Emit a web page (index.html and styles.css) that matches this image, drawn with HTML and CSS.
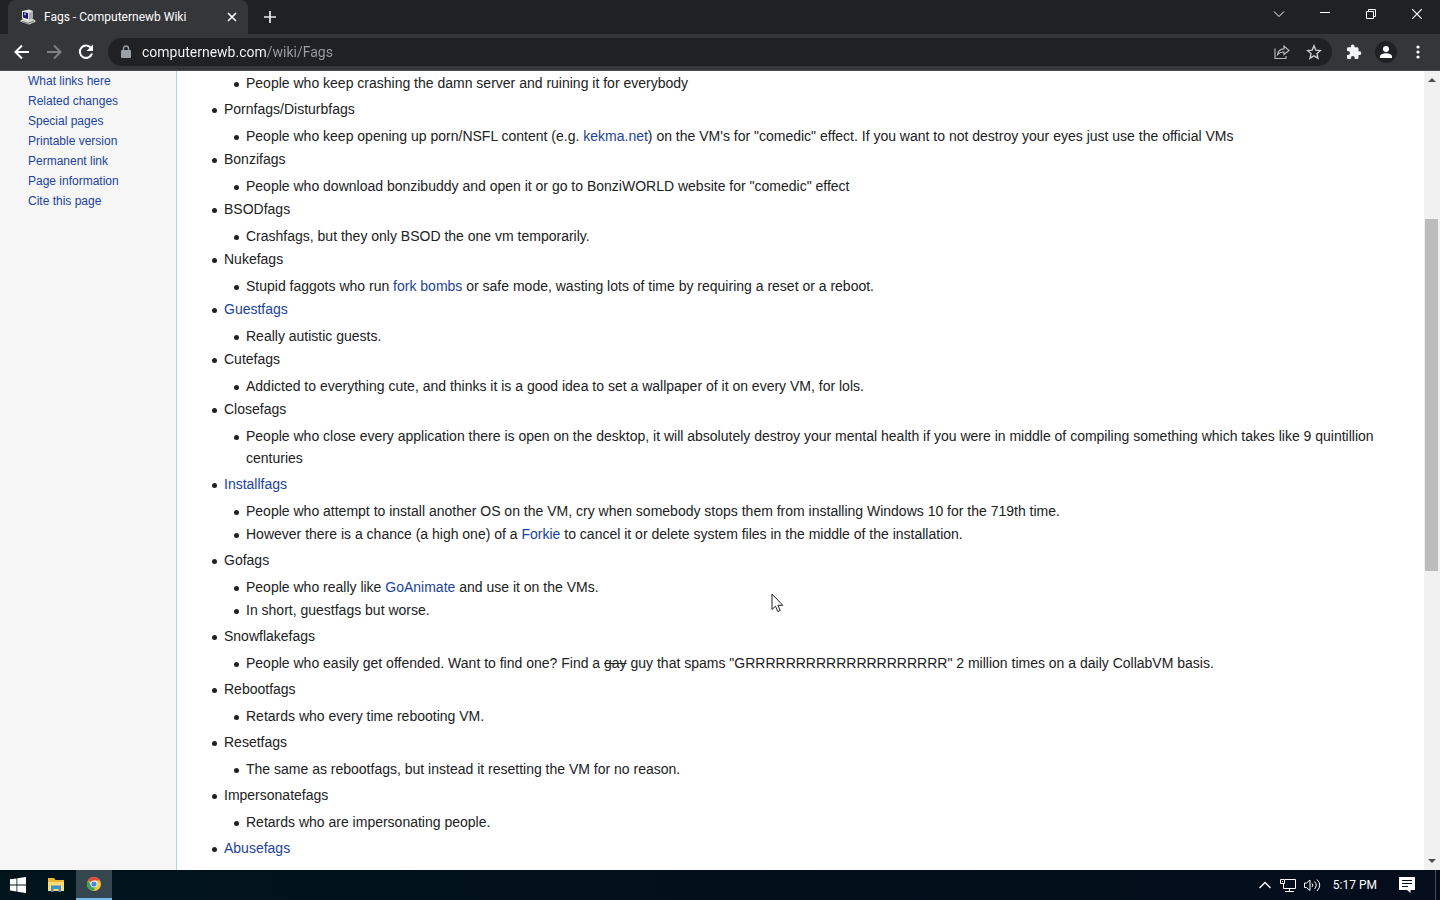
FILE: index.html
```html
<!DOCTYPE html>
<html lang="en">
  <head>
    <meta charset="UTF-8" />
    <meta name="viewport" content="width=device-width, initial-scale=1.0" />
    <title>Fags - Computernewb Wiki</title>
    <link rel="stylesheet" href="styles.css">
  </head>
  <body>
    <header class="tabstrip">
      <div class="tab">
        <svg class="favicon" width="16" height="16" viewBox="0 0 16 16">
          <path d="M0 11.500l3-2h10l3 2v1.500l-7 3-9-3z" fill="#d6d6d0" stroke="#0c0c0c" stroke-width=".6" />
          <path d="M2 2L9 .5l4 1.500v7l-5 3-6-2.500z" fill="#e6e6e0" />
          <path d="M3 3l5 1v6L3 8.500z" fill="#17176d" />
          <path d="M4 4l2 .5v2L4 6z" fill="#8f96f0" />
          <path d="M9 4l4-2v7l-4 2z" fill="#a9a9b4" />
          <path d="M2 12.500l6 1.800 6-2.300" fill="none" stroke="#555" stroke-width=".8" />
        </svg>
        <span class="tab-title">Fags - Computernewb Wiki</span>
        <button class="icon-btn tab-close" aria-label="Close tab">
          <svg width="10" height="10" viewBox="0 0 10 10"><path d="M1 1l8 8M9 1l-8 8" stroke="#fff" stroke-width="1.6" /></svg>
        </button>
      </div>
      <button class="icon-btn new-tab" aria-label="New tab">
        <svg width="12" height="12" viewBox="0 0 12 12"><path d="M6 0v12M0 6h12" stroke="#e8eaed" stroke-width="1.7" /></svg>
      </button>
      <div class="window-buttons">
        <button class="icon-btn" aria-label="Search tabs">
          <svg width="12" height="12" viewBox="0 0 12 12"><path d="M1 3.500l5 5 5-5" fill="none" stroke="#fff" /></svg>
        </button>
        <button class="icon-btn" aria-label="Minimize">
          <svg width="10" height="10" viewBox="0 0 10 10"><path d="M0 3.500h10" stroke="#fff" /></svg>
        </button>
        <button class="icon-btn" aria-label="Restore">
          <svg width="10" height="10" viewBox="0 0 10 10"><path d="M.5 2.500h7v7h-7zM2.500 2.500v-2h7v7h-2" fill="none" stroke="#fff" /></svg>
        </button>
        <button class="icon-btn" aria-label="Close">
          <svg width="10" height="10" viewBox="0 0 10 10"><path d="M0 0l10 10M10 0L0 10" stroke="#fff" stroke-width="1.2" /></svg>
        </button>
      </div>
    </header>

    <nav class="toolbar">
      <button class="icon-btn nav-btn" aria-label="Back">
        <svg width="16" height="16" viewBox="0 0 16 16"><path d="M15 8H2M8 1.500L1.500 8 8 14.500" fill="none" stroke="#fff" stroke-width="2" /></svg>
      </button>
      <button class="icon-btn nav-btn" aria-label="Forward">
        <svg width="16" height="16" viewBox="0 0 16 16"><path d="M1 8h13M8 1.500L14.500 8 8 14.500" fill="none" stroke="#808185" stroke-width="2" /></svg>
      </button>
      <button class="icon-btn nav-btn" aria-label="Reload">
        <svg width="16" height="16" viewBox="0 0 16 16">
          <path d="M13.200 4.200A6.200 6.200 0 1 0 14 9.500" fill="none" stroke="#fff" stroke-width="2" />
          <path d="M15 .5v6.500H8.500z" fill="#fff" />
        </svg>
      </button>
      <div class="omnibox">
        <svg width="10" height="14" viewBox="0 0 10 14">
          <path d="M2.500 6V3.500a2.500 2.500 0 0 1 5 0V6" fill="none" stroke="#9aa0a6" stroke-width="1.400" />
          <rect x="0" y="5" width="10" height="8" rx="1" fill="#9aa0a6" />
        </svg>
        <input class="url" type="text" aria-label="Address" value="computernewb.com/wiki/Fags" />
        <button class="icon-btn" aria-label="Share">
          <svg width="16" height="16" viewBox="0 0 16 16" fill="none" stroke="#b4b7bb" stroke-width="1.200">
            <path d="M1 4.500v10h11V12" />
            <path d="M3.500 10.500C4 6.500 6.500 5 10 4.800V2l5 4.500-5 4V8C7 8 5 8.700 3.500 10.500z" />
          </svg>
        </button>
        <button class="icon-btn" aria-label="Bookmark">
          <svg width="16" height="16" viewBox="0 0 16 16"><path d="M8 1.800l1.800 4.300 4.700.4L11 9.600l1 4.600-4-2.400-4 2.400 1-4.600-3.500-3.100 4.700-.4z" fill="none" stroke="#c8cacd" stroke-width="1.400" /></svg>
        </button>
      </div>
      <div class="actions">
        <button class="icon-btn" aria-label="Extensions">
          <svg width="16" height="16" viewBox="0 0 16 16"><path d="M13.500 7.300h-1V4.600c0-.8-.6-1.400-1.400-1.400H8.500v-1a1.800 1.800 0 0 0-3.600 0v1H2.300C1.500 3.200 1 3.800 1 4.600v2.500h1a2 2 0 0 1 0 4H1v2.600c0 .8.500 1.300 1.300 1.300h2.600v-1a1.900 1.900 0 0 1 3.800 0v1h2.400c.8 0 1.400-.5 1.400-1.300V11h1a1.850 1.850 0 0 0 0-3.700z" fill="#f1f3f4" /></svg>
        </button>
        <button class="icon-btn profile" aria-label="Profile">
          <svg width="12" height="12" viewBox="0 0 12 12" fill="#fff"><circle cx="6" cy="3" r="3" /><path d="M0 12v-1.500C0 8.200 3.500 7.200 6 7.200s6 1 6 3.300V12z" /></svg>
        </button>
        <button class="icon-btn" aria-label="Menu">
          <svg width="4" height="14" viewBox="0 0 4 14" fill="#fff"><circle cx="2" cy="2" r="1.600" /><circle cx="2" cy="7" r="1.600" /><circle cx="2" cy="12" r="1.600" /></svg>
        </button>
      </div>
    </nav>

    <div class="viewport">
      <aside class="sidebar">
        <a href="#">What links here</a>
        <a href="#">Related changes</a>
        <a href="#">Special pages</a>
        <a href="#">Printable version</a>
        <a href="#">Permanent link</a>
        <a href="#">Page information</a>
        <a href="#">Cite this page</a>
      </aside>
      <main class="content">
        <ul>
          <li class="continued">
            <ul>
              <li>People who keep crashing the damn server and ruining it for everybody</li>
            </ul>
          </li>
        </ul>
        <ul>
          <li>Pornfags/Disturbfags
            <ul>
              <li>People who keep opening up porn/NSFL content (e.g. <a href="#">kekma.net</a>) on the VM's for "comedic" effect. If you want to not destroy your eyes just use the official VMs</li>
            </ul>
          </li>
          <li>Bonzifags
            <ul>
              <li>People who download bonzibuddy and open it or go to BonziWORLD website for "comedic" effect</li>
            </ul>
          </li>
          <li>BSODfags
            <ul>
              <li>Crashfags, but they only BSOD the one vm temporarily.</li>
            </ul>
          </li>
          <li>Nukefags
            <ul>
              <li>Stupid faggots who run <a href="#">fork bombs</a> or safe mode, wasting lots of time by requiring a reset or a reboot.</li>
            </ul>
          </li>
          <li><a href="#">Guestfags</a>
            <ul>
              <li>Really autistic guests.</li>
            </ul>
          </li>
          <li>Cutefags
            <ul>
              <li>Addicted to everything cute, and thinks it is a good idea to set a wallpaper of it on every VM, for lols.</li>
            </ul>
          </li>
          <li>Closefags
            <ul>
              <li>People who close every application there is open on the desktop, it will absolutely destroy your mental health if you were in middle of compiling something which takes like 9 quintillion centuries</li>
            </ul>
          </li>
        </ul>
        <ul>
          <li><a href="#">Installfags</a>
            <ul>
              <li>People who attempt to install another OS on the VM, cry when somebody stops them from installing Windows 10 for the 719th time.</li>
              <li>However there is a chance (a high one) of a <a href="#">Forkie</a> to cancel it or delete system files in the middle of the installation.</li>
            </ul>
          </li>
        </ul>
        <ul>
          <li>Gofags
            <ul>
              <li>People who really like <a href="#">GoAnimate</a> and use it on the VMs.</li>
              <li>In short, guestfags but worse.</li>
            </ul>
          </li>
        </ul>
        <ul>
          <li>Snowflakefags
            <ul>
              <li>People who easily get offended. Want to find one? Find a <s>gay</s> guy that spams "GRRRRRRRRRRRRRRRRRRRR" 2 million times on a daily CollabVM basis.</li>
            </ul>
          </li>
        </ul>
        <ul>
          <li>Rebootfags
            <ul>
              <li>Retards who every time rebooting VM.</li>
            </ul>
          </li>
        </ul>
        <ul>
          <li>Resetfags
            <ul>
              <li>The same as rebootfags, but instead it resetting the VM for no reason.</li>
            </ul>
          </li>
        </ul>
        <ul>
          <li>Impersonatefags
            <ul>
              <li>Retards who are impersonating people.</li>
            </ul>
          </li>
        </ul>
        <ul>
          <li><a href="#">Abusefags</a></li>
        </ul>
      </main>
      <div class="scrollbar">
        <svg width="16" height="17" viewBox="0 0 16 17"><path d="M4 11h8L8 7z" fill="#505050" /></svg>
        <div class="track-above"></div>
        <div class="thumb"></div>
        <div class="track-below"></div>
        <svg width="16" height="17" viewBox="0 0 16 17"><path d="M4 6h8l-4 4z" fill="#505050" /></svg>
      </div>
    </div>

    <footer class="taskbar">
      <button class="task" aria-label="Start">
        <svg width="16" height="16" viewBox="0 0 16 16" fill="#fff"><path d="M0 2.300L6.500 1.400v6.100H0zM7.300 1.300L16 0v7.500H7.300zM0 8.400h6.500v6.100L0 13.600zM7.300 8.400H16V16l-8.700-1.300z" /></svg>
      </button>
      <button class="task" aria-label="File Explorer">
        <svg width="16" height="14" viewBox="0 0 16 14">
          <path d="M0 0h6l1.500 2H16v11H0z" fill="#e9b73a" />
          <path d="M0 4h16v9H0z" fill="#fbdc72" />
          <path d="M3 7.500h10V14h-2.500v-3h-5v3H3z" fill="#3e92cf" />
        </svg>
      </button>
      <button class="task active" aria-label="Chrome">
        <svg width="16" height="16" viewBox="0 0 16 16">
          <circle cx="8" cy="8" r="7" fill="#f7c932" />
          <path d="M8 8L2 4.400A7 7 0 0 1 14.100 4.500H8z" fill="#df4a3b" />
          <path d="M2 4.400A7 7 0 0 0 7.300 15L10.500 9.700 8 8 5 9.600z" fill="#3da357" />
          <circle cx="8" cy="8" r="3.400" fill="#fff" />
          <circle cx="8" cy="8" r="2.600" fill="#4a83e8" />
        </svg>
      </button>
      <div class="tray">
        <div class="tray-icons">
          <button class="icon-btn" aria-label="Show hidden icons">
            <svg width="14" height="8" viewBox="0 0 14 8"><path d="M1.500 7L7 1.500 12.500 7" fill="none" stroke="#fff" stroke-width="1.300" /></svg>
          </button>
          <button class="icon-btn" aria-label="Network">
            <svg width="16" height="14" viewBox="0 0 16 14" fill="none" stroke="#fff"><path d="M5 1.500h10.500v9h-12V6M9.500 10.500v3M5 13.500h9M.5 1.500h4v4h-4zM2.500 3v1" /></svg>
          </button>
          <button class="icon-btn" aria-label="Volume">
            <svg width="17" height="14" viewBox="0 0 17 14" fill="none" stroke="#fff"><path d="M.5 5v4.500h2l3.500 3V2l-3.500 3zM8 5.500q1.500 1.700 0 3.500M10.500 3.500q3.500 3.700 0 7.500M13 1.500q5.500 5.500 0 11.500" /></svg>
          </button>
        </div>
        <time class="clock">5:17 PM</time>
        <button class="icon-btn" aria-label="Notifications">
          <svg width="16" height="16" viewBox="0 0 16 16"><path d="M0 0h16v13h-4.500v3L8 13H0z" fill="#fff" /><path d="M3 3.500h10M3 6.500h10M3 9.500h6" stroke="#050d1c" /></svg>
        </button>
      </div>
    </footer>

    <svg class="cursor" width="13" height="20" viewBox="0 0 13 20"><path d="M1 1v15.500l3.500-3.300 2.300 5.300 2.400-1-2.300-5.200h4.900z" fill="#fff" stroke="#222" /></svg>
  </body>
</html>
```
FILE: styles.css
```css
* {
  box-sizing: border-box;
}
body {
  margin: 0;
  height: 100vh;
  display: flex;
  flex-direction: column;
  overflow: hidden;
  font-family: "Liberation Sans", Arial, sans-serif;
  font-size: 14px;
  color: #202122;
}
a {
  color: #1a439c;
  text-decoration: none;
}
a:hover {
  text-decoration: underline;
}
svg {
  display: block;
  flex: none;
}
.icon-btn {
  display: flex;
  align-items: center;
  justify-content: center;
  padding: 0;
  border: none;
  background: none;
}

/* browser window */
.tabstrip {
  display: flex;
  align-items: center;
  flex: none;
  height: 34px;
  padding-left: 8px;
  background: #202124;
}
.tab {
  display: flex;
  align-items: center;
  gap: 8px;
  width: 240px;
  height: 34px;
  padding: 0 10px 0 12px;
  border-radius: 8px 8px 0 0;
  background: #35363a;
}
.tab-title {
  flex: 1;
  font: 12px Roboto, "Open Sans", sans-serif;
  white-space: nowrap;
  color: #fff;
}
.tab-close {
  width: 12px;
  height: 16px;
}
.new-tab {
  width: 28px;
  height: 28px;
  margin-left: 8px;
}
.window-buttons {
  display: flex;
  align-self: flex-start;
  margin-left: auto;
}
.window-buttons .icon-btn {
  width: 46px;
  height: 28px;
}
.toolbar {
  display: flex;
  align-items: center;
  flex: none;
  height: 37px;
  padding: 0 11px 0 6px;
  border-bottom: 1px solid #4b4c50;
  background: #35363a;
}
.nav-btn {
  width: 32px;
  height: 28px;
}
.omnibox {
  display: flex;
  align-items: center;
  flex: 1;
  gap: 16px;
  height: 28px;
  margin-left: 6px;
  padding: 0 10px 0 13px;
  border-radius: 14px;
  background: #202124;
}
/* host is white, path is grey */
.url {
  flex: 1;
  margin-left: -5px;
  padding: 0;
  border: none;
  outline: none;
  font: 14px Roboto, "Open Sans", sans-serif;
  color: transparent;
  background: linear-gradient(to right, #fff 125px, #9aa0a6 125px);
  background-clip: text;
  -webkit-background-clip: text;
}
.actions {
  display: flex;
  align-items: center;
  gap: 10px;
  margin-left: 11px;
}
.actions .icon-btn {
  width: 22px;
  height: 22px;
}
.actions .profile {
  border-radius: 50%;
  background: #202124;
}

/* wiki page */
.viewport {
  display: flex;
  flex: 1;
  min-height: 0;
  background: #fff;
}
.sidebar {
  display: flex;
  flex-direction: column;
  flex: none;
  width: 177px;
  padding: 0 0 0 28px;
  border-right: 1px solid #a7d7e9;
  background: #f6f6f6;
  font-size: 12px;
  line-height: 20px;
}
.content {
  flex: 1;
  min-width: 0;
  padding: 1px 24px 0 25px;
  overflow: hidden;
  line-height: 22px;
}
.content ul {
  margin: 4px 0 0 22px;
  padding: 0;
  list-style-image: url('data:image/svg+xml,<svg xmlns="http://www.w3.org/2000/svg" width="5" height="12"><circle cx="2.5" cy="8.5" r="2.5" fill="%23202122"/></svg>');
}
.content > ul:first-child,
.content .continued > ul {
  margin-top: 0;
}
.content li {
  margin-bottom: 1px;
}
.content li ul {
  margin-top: 5px;
}
.content .continued::marker {
  content: "";
}
.scrollbar {
  display: flex;
  flex-direction: column;
  flex: none;
  width: 16px;
  background: #f1f1f1;
}
.track-above {
  flex: 131;
}
.thumb {
  flex: 352;
  margin: 0 2px 0 1px;
  background: #bcbcbc;
}
.track-below {
  flex: 282;
}

/* windows taskbar */
.taskbar {
  display: flex;
  flex: none;
  height: 30px;
  background: linear-gradient(to right, #01141c, #050d1c);
}
.task {
  display: flex;
  align-items: center;
  justify-content: center;
  width: 36px;
  padding: 0;
  border: none;
  background: none;
}
.task:nth-child(2) {
  width: 40px;
}
.task.active {
  border-bottom: 2px solid #76b9ed;
  background: #36464e;
}
.tray {
  display: flex;
  align-items: center;
  gap: 12px;
  margin-left: auto;
  margin-right: 4px;
  padding-right: 20px;
  border-right: 1px solid #46505c;
}
.tray-icons {
  display: flex;
  align-items: center;
  gap: 8px;
}
.clock {
  margin-right: 10px;
  font: 12px Roboto, "Open Sans", sans-serif;
  color: #fff;
}

.cursor {
  position: absolute;
  left: 771px;
  top: 593px;
}
```
